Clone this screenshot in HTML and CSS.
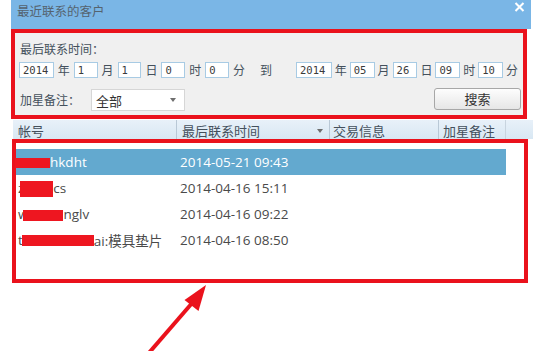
FILE: index.html
```html
<!DOCTYPE html>
<html lang="zh">
<head>
<meta charset="utf-8">
<title>最近联系的客户</title>
<link rel="stylesheet" href="styles.css">
</head>
<body>
<div class="window">
  <div class="titlebar">
    <span class="title">最近联系的客户</span>
    <svg class="close" width="11" height="10" viewBox="0 0 11 10"><path d="M1.5 1 L9.5 9 M9.5 1 L1.5 9" stroke="#ffffff" stroke-width="2" fill="none"/></svg>
  </div>

  <div class="filter">
    <div class="lbl">最后联系时间<span class="colon">：</span></div>
    <div class="timerow">
      <span class="tin w35">2014</span><span class="unit">年</span>
      <span class="tin">1</span><span class="unit">月</span>
      <span class="tin">1</span><span class="unit">日</span>
      <span class="tin">0</span><span class="unit">时</span>
      <span class="tin">0</span><span class="unit">分</span>
      <span class="to">到</span>
      <span class="tin w36">2014</span><span class="unit u2">年</span>
      <span class="tin w25">05</span><span class="unit u2">月</span>
      <span class="tin w25">26</span><span class="unit u2">日</span>
      <span class="tin w25">09</span><span class="unit u2">时</span>
      <span class="tin w25">10</span><span class="unit u2">分</span>
    </div>
    <div class="row3">
      <div class="starfilter">
        <span class="lbl2">加星备注<span class="colon">：</span></span>
        <div class="select"><span>全部</span><i class="tri"></i></div>
      </div>
      <div class="btn">搜索</div>
    </div>
  </div>

  <div class="ghead">
    <div class="gc c1">帐号</div>
    <div class="gc c2"><span>最后联系时间</span><i class="tri"></i></div>
    <div class="gc c3">交易信息</div>
    <div class="gc c4">加星备注</div>
    <div class="gc c5"></div>
  </div>

  <div class="list">
    <div class="row sel">
      <div class="name"><i class="red r1"></i>hkdht</div>
      <div class="date">2014-05-21 09:43</div>
    </div>
    <div class="row">
      <div class="name">z<i class="red r2"></i>cs</div>
      <div class="date">2014-04-16 15:11</div>
    </div>
    <div class="row">
      <div class="name">w<i class="red r3"></i>nglv</div>
      <div class="date">2014-04-16 09:22</div>
    </div>
    <div class="row">
      <div class="name">t<i class="red r4"></i>ai:模具垫片</div>
      <div class="date">2014-04-16 08:50</div>
    </div>
  </div>
</div>

<svg class="arrow" width="536" height="351" viewBox="0 0 536 351">
  <line x1="148" y1="354" x2="193" y2="302" stroke="#ea121c" stroke-width="4"/>
  <polygon points="206,285 184.5,300 198.5,311" fill="#ea121c"/>
</svg>
</body>
</html>
```

FILE: styles.css
```css
html, body {
  margin: 0;
  padding: 0;
}
body {
  width: 536px;
  height: 351px;
  overflow: hidden;
  background: #ffffff;
  position: relative;
  font-family: "Noto Sans CJK SC", sans-serif;
  color: #333;
}
.window {
  margin-left: 11px;
  width: 522px;
}
.titlebar {
  box-sizing: border-box;
  width: 520px;
  height: 29px;
  background: #7ab6e6;
  display: flex;
  justify-content: space-between;
  align-items: flex-start;
  padding: 3px 6px 0 6px;
}
.title {
  font-size: 12.5px;
  line-height: 15px;
  color: #55636f;
}
.close {
  margin-top: -1px;
}

.filter {
  box-sizing: border-box;
  width: 516px;
  height: 90px;
  border: 4px solid #ea121c;
  background: #f0f0f0;
  padding: 8px 2px 0 4px;
}
.colon {
  font-family: "Noto Sans CJK TC", sans-serif;
}
.lbl {
  margin-left: 1px;
  font-size: 12px;
  line-height: 16px;
  color: #44505c;
  white-space: nowrap;
}
.timerow {
  margin-top: 5px;
  height: 16px;
  display: flex;
  align-items: center;
}
.tin {
  box-sizing: border-box;
  width: 24px;
  height: 16px;
  border: 1px solid #a8cbe4;
  background: #ffffff;
  font-family: "DejaVu Sans Mono", monospace;
  font-size: 10.5px;
  line-height: 14px;
  padding-left: 3px;
  color: #3a3a3a;
}
.w35 { width: 35px; }
.w36 { width: 36px; }
.w25 { width: 25px; }
.unit {
  width: 12px;
  margin: 0 4px;
  font-size: 12px;
  line-height: 16px;
  color: #44505c;
  text-align: center;
}
.unit.u2 { margin: 0 3px; }
.to {
  width: 12px;
  margin: 0 24px 0 11px;
  font-size: 12px;
  line-height: 16px;
  color: #44505c;
}
.row3 {
  margin-top: 10px;
  display: flex;
  justify-content: space-between;
  align-items: flex-start;
}
.starfilter {
  display: flex;
  align-items: center;
  margin-top: 1px;
}
.lbl2 {
  margin-left: 1px;
  width: 60px;
  font-size: 12px;
  line-height: 22px;
  color: #44505c;
  white-space: nowrap;
}
.select {
  box-sizing: border-box;
  margin-left: 11px;
  width: 94px;
  height: 22px;
  background: #ffffff;
  border: 1px solid #d6d6d6;
  display: flex;
  justify-content: space-between;
  align-items: center;
  padding: 0 8px 0 4px;
  font-size: 13px;
  color: #333;
}
.tri {
  display: block;
  width: 0;
  height: 0;
  border-left: 3.5px solid transparent;
  border-right: 3.5px solid transparent;
  border-top: 4px solid #6e6e6e;
}
.btn {
  box-sizing: border-box;
  width: 87px;
  height: 22px;
  border: 1px solid #a7a7a7;
  border-radius: 3px;
  background: linear-gradient(#fdfdfd, #e6e6e6);
  font-size: 13px;
  line-height: 20px;
  text-align: center;
  color: #333;
}

.ghead {
  margin: 1px 0 0 2px;
  width: 520px;
  height: 19px;
  display: flex;
  background: linear-gradient(#e8f1f9, #d8e7f3);
  font-size: 13px;
  color: #44505c;
}
.gc {
  box-sizing: border-box;
  height: 19px;
  line-height: 17px;
  padding: 2px 0 0 5px;
}
.c1 { width: 163px; }
.c2 {
  width: 153px;
  border-left: 1px solid #b9c8d6;
  display: flex;
  justify-content: space-between;
  padding-right: 6px;
}
.c2 .tri { margin-top: 7px; }
.c3 { width: 109px; border-left: 1px solid #b9c8d6; padding-left: 3px; }
.c4 { width: 67px; border-left: 1px solid #b9c8d6; padding-left: 4px; }
.c5 { width: 28px; border-left: 1px solid #c8d4df; }

.list {
  box-sizing: border-box;
  margin-left: 1px;
  width: 516px;
  height: 144px;
  border: 4px solid #ea121c;
  background: #ffffff;
  padding-top: 6px;
}
.row {
  width: 490px;
  height: 26px;
  display: flex;
  align-items: center;
  font-family: "Open Sans", "Noto Sans CJK SC", sans-serif;
  font-size: 13.5px;
  color: #4a4a4a;
}
.row.sel {
  background: #63a9cf;
  color: #ffffff;
}
.name {
  box-sizing: border-box;
  width: 164px;
  padding-left: 2px;
  display: flex;
  align-items: center;
  white-space: nowrap;
}
.red {
  display: block;
  background: #ee1620;
}
.r1 { width: 35px; height: 10px; margin-left: -3px; margin-top: 1px; }
.r2 { width: 33px; height: 16px; margin-left: -4px; margin-top: 2px; }
.r3 { width: 40px; height: 11px; margin-left: -5px; margin-top: 3px; }
.r4 { width: 72px; height: 11px; margin-left: -1px; margin-top: 1px; }

.arrow {
  position: absolute;
  left: 0;
  top: 0;
  pointer-events: none;
}
```
